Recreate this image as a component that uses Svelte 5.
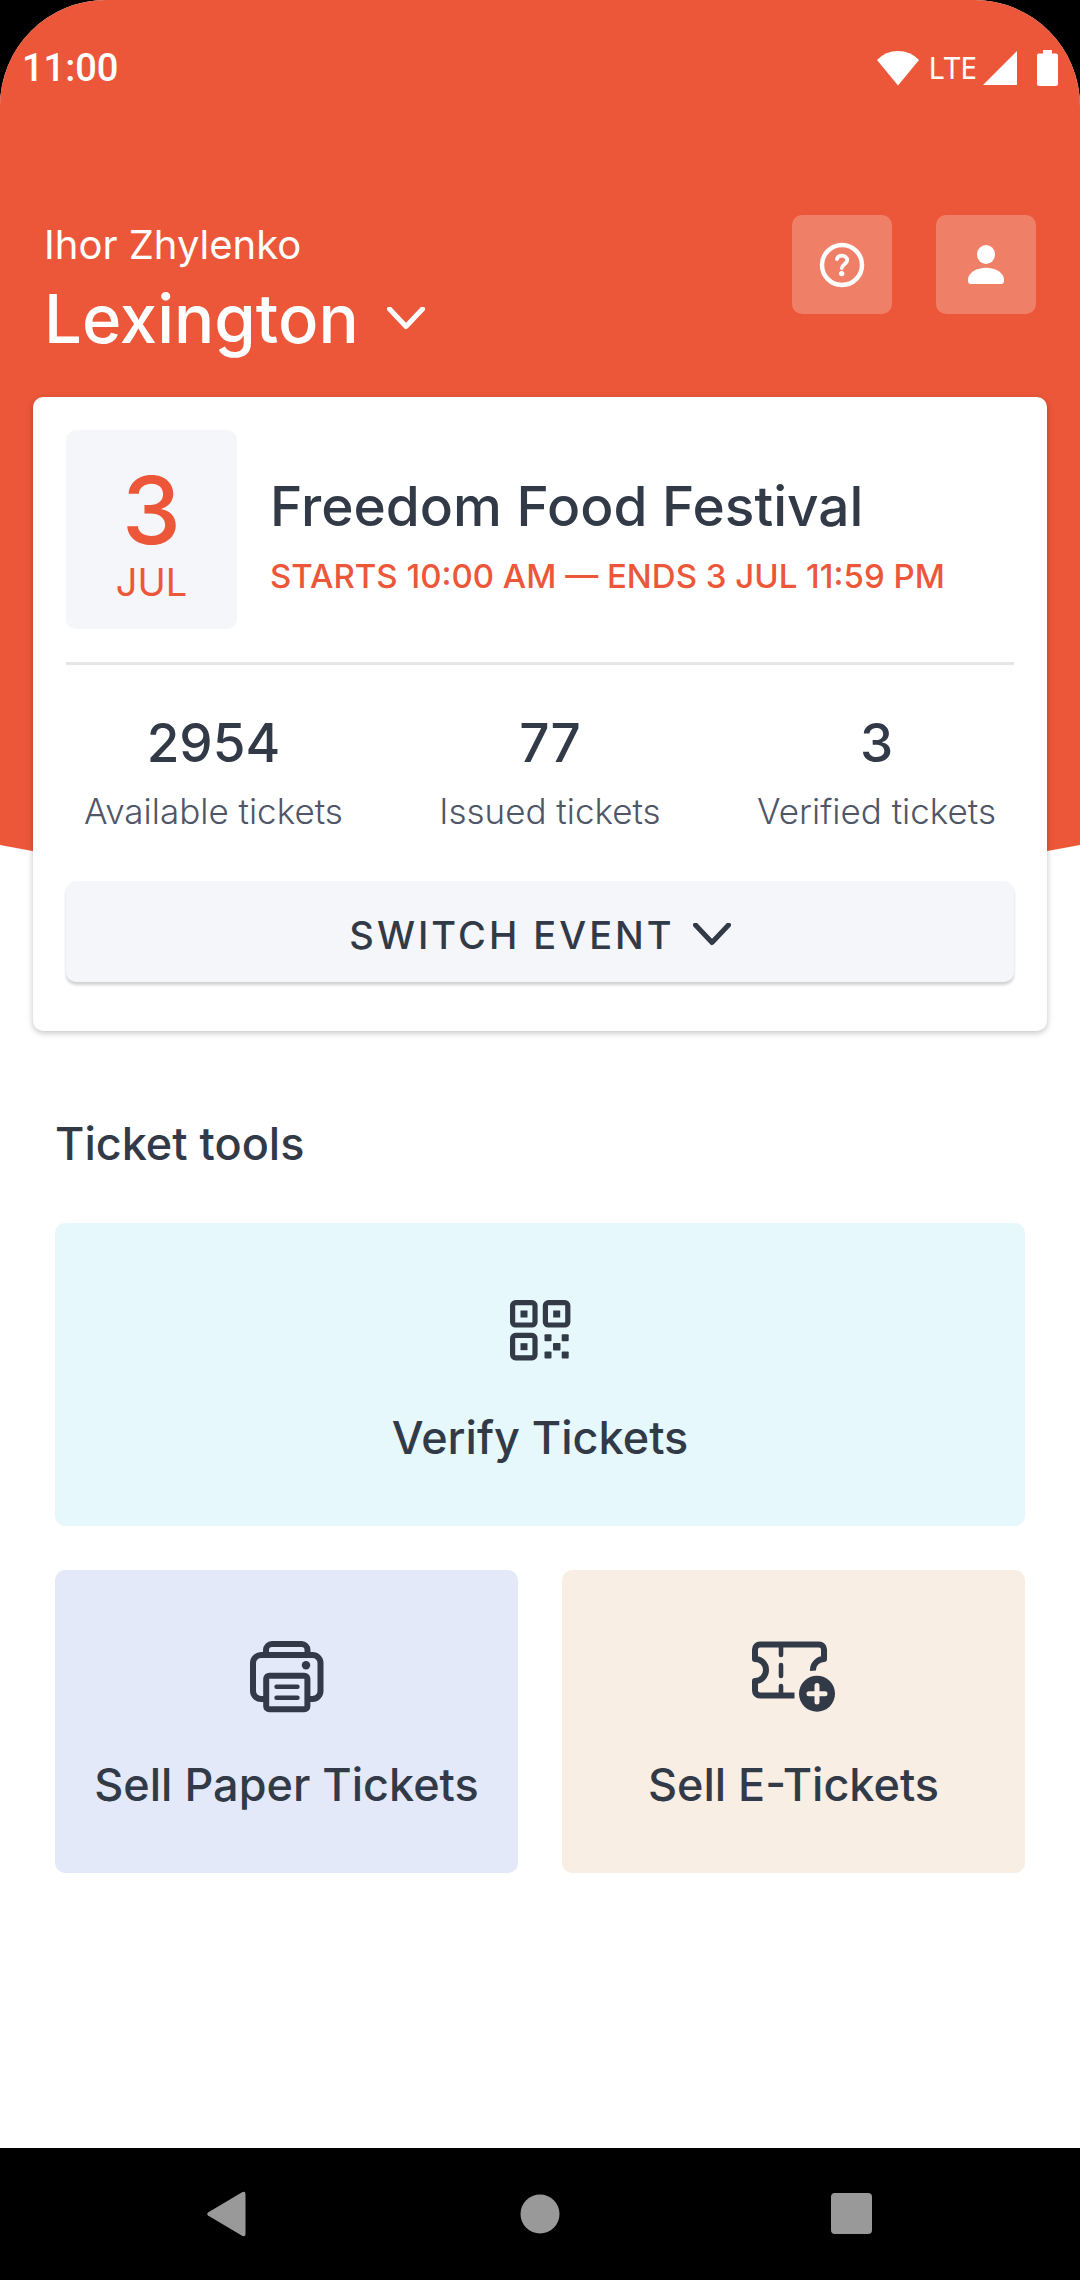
<script lang="ts">
  export let userName = 'Ihor Zhylenko';
  export let location = 'Lexington';

  const event = {
    day: '3',
    month: 'JUL',
    title: 'Freedom Food Festival',
    period: 'STARTS 10:00 AM — ENDS 3 JUL 11:59 PM'
  };

  const stats = [
    { value: 2954, label: 'Available tickets' },
    { value: 77, label: 'Issued tickets' },
    { value: 3, label: 'Verified tickets' }
  ];

  const tools = [
    { id: 'verify', label: 'Verify Tickets' },
    { id: 'paper', label: 'Sell Paper Tickets' },
    { id: 'eticket', label: 'Sell E-Tickets' }
  ];
</script>

<div class="screen">
  <div class="backdrop"></div>

  <div class="status-bar">
    <span class="time">11:00</span>
    <div class="status-icons">
      <svg width="42" height="36" viewBox="0 0 42 36">
        <path d="M0 10 Q8.500 1 21 1 Q33.500 1 42 10 L21 35.500 Z" fill="#fff" />
      </svg>
      <span class="network">LTE</span>
      <svg class="signal" width="34" height="36" viewBox="0 0 34 36">
        <path d="M34 1 V35 H0 Z" fill="#fff" />
      </svg>
      <svg width="21" height="36" viewBox="0 0 21 36">
        <path d="M6 0 H15 V3.500 H19 A2 2 0 0 1 21 5.500 V34 A2 2 0 0 1 19 36 H2 A2 2 0 0 1 0 34 V5.500 A2 2 0 0 1 2 3.500 H6 Z" fill="#fff" />
      </svg>
    </div>
  </div>

  <header>
    <div class="account">
      <div class="user-name">{userName}</div>
      <button class="location">
        {location}
        <svg width="38" height="24" viewBox="0 0 38 24">
          <path d="M2.500 2 L19 19.500 L35.500 2" class="chevron" />
        </svg>
      </button>
    </div>
    <div class="actions">
      <button class="action-btn" aria-label="Help">
        <svg width="46" height="46" viewBox="0 0 46 46" fill="none" stroke="#fff">
          <circle cx="23" cy="23" r="20" stroke-width="4.500" />
          <path d="M18 17 C18.600 14.800 20.400 13.700 22.800 13.700 C25.900 13.700 28.200 15.400 28.200 18.200 C28.200 22 22.800 22.300 22.800 26" stroke-width="3.800" stroke-linecap="round" />
          <circle cx="22.700" cy="31.600" r="2.700" fill="#fff" stroke="none" />
        </svg>
      </button>
      <button class="action-btn" aria-label="Profile">
        <svg width="36" height="39" viewBox="0 0 36 39" fill="#fff">
          <ellipse cx="18" cy="9.500" rx="9" ry="9.500" />
          <path d="M0 34.500 C0 28 8 22.700 18 22.700 S36 28 36 34.500 V36 A3 3 0 0 1 33 39 H3 A3 3 0 0 1 0 36 Z" />
        </svg>
      </button>
    </div>
  </header>

  <main>
    <section class="event-card">
      <div class="event">
        <div class="date">
          <span class="day">{event.day}</span>
          <span class="month">{event.month}</span>
        </div>
        <div class="event-info">
          <h1>{event.title}</h1>
          <p>{event.period}</p>
        </div>
      </div>

      <div class="stats">
        {#each stats as stat}
          <div class="stat">
            <strong>{stat.value}</strong>
            <span>{stat.label}</span>
          </div>
        {/each}
      </div>

      <button class="switch-btn">
        SWITCH EVENT
        <svg width="38" height="24" viewBox="0 0 38 24">
          <path d="M2.500 2 L19 19.500 L35.500 2" class="chevron" />
        </svg>
      </button>
    </section>

    <section class="tools">
      <h2>Ticket tools</h2>
      <div class="tool-grid">
        {#each tools as tool}
          <button class="tool {tool.id}">
            <span class="tool-icon">
              {#if tool.id === 'verify'}
                <svg width="61" height="61" viewBox="0 0 61 61" fill="currentColor">
                  <g fill="none" stroke="currentColor" stroke-width="5.200">
                    <rect x="2.600" y="2.600" width="22.400" height="22.400" rx="3" />
                    <rect x="35.400" y="2.600" width="22.400" height="22.400" rx="3" />
                    <rect x="2.600" y="35.400" width="22.400" height="22.400" rx="3" />
                  </g>
                  <rect x="10.500" y="10.500" width="7" height="7" />
                  <rect x="43.200" y="10.500" width="7" height="7" />
                  <rect x="10.500" y="43.200" width="7" height="7" />
                  <rect x="34.500" y="34.300" width="7" height="7" rx="1" />
                  <rect x="51.700" y="34.300" width="7" height="7" rx="1" />
                  <rect x="43" y="43" width="7.500" height="7.500" rx="1" />
                  <rect x="34.500" y="51.500" width="7" height="7" rx="1" />
                  <rect x="51.700" y="51.500" width="7" height="7" rx="1" />
                </svg>
              {:else if tool.id === 'paper'}
                <svg width="74" height="72" viewBox="0 0 74 72" fill="none" stroke="currentColor" stroke-width="6">
                  <path d="M16 14 V9 A6 6 0 0 1 22 3 H51.500 A6 6 0 0 1 57.500 9 V14" />
                  <path d="M16 58 H11 A8 8 0 0 1 3 50 V22 A8 8 0 0 1 11 14 H62.500 A8 8 0 0 1 70.500 22 V50 A8 8 0 0 1 62.500 58 H57.500" />
                  <rect x="16.200" y="34.700" width="41.200" height="33.500" rx="3" />
                  <path d="M26.500 45.700 H47.500 M26.500 56.700 H47.500" stroke-width="4.400" stroke-linecap="round" />
                  <circle cx="56" cy="24.300" r="4.200" fill="currentColor" stroke="none" />
                </svg>
              {:else}
                <svg width="84" height="72" viewBox="0 0 84 72" fill="none" stroke="currentColor" stroke-width="6" stroke-linejoin="round">
                  <path d="M42.500 54.500 H8 A5 5 0 0 1 3 49.500 V40 A11 11 0 0 0 3 18 V8.500 A5 5 0 0 1 8 3.500 H67 A5 5 0 0 1 72 8.500 V18 A11 11 0 0 0 61 29.700" />
                  <path d="M29 5 V14 M29 24 V35 M29 45 V53" stroke-width="4.600" stroke-linecap="round" />
                  <circle cx="65" cy="52.700" r="18" fill="currentColor" stroke="none" />
                  <path d="M65 44.500 V61 M57 52.700 H73" class="plus" />
                </svg>
              {/if}
            </span>
            {tool.label}
          </button>
        {/each}
      </div>
    </section>
  </main>

  <nav>
    <button aria-label="Back">
      <svg width="42" height="46" viewBox="0 0 42 46">
        <path d="M1 21.500 L35.500 1 Q38.500 0 38.500 3 V43 Q38.500 46 35.500 45 L1 24.500 Q-0.500 23 1 21.500 Z" fill="#999" />
      </svg>
    </button>
    <button aria-label="Home">
      <svg width="42" height="42" viewBox="0 0 42 42">
        <circle cx="21" cy="21" r="19.500" fill="#999" />
      </svg>
    </button>
    <button aria-label="Recent apps">
      <svg width="42" height="42" viewBox="0 0 42 42">
        <rect width="41" height="41" rx="4" fill="#999" />
      </svg>
    </button>
  </nav>
</div>

<style>
  :global(body) {
    margin: 0;
    background: #000;
  }

  .screen {
    --accent: #ec5739;
    --dark: #323a48;
    --muted: #4f5668;
    --soft: #f5f6fa;

    position: relative;
    display: flex;
    flex-direction: column;
    min-height: 100vh;
    box-sizing: border-box;
    border-radius: 106px 106px 0 0;
    overflow: hidden;
    background: #fff;
    color: var(--dark);
    font-family: Inter, 'Liberation Sans', sans-serif;
  }

  button {
    margin: 0;
    padding: 0;
    border: none;
    background: none;
    color: inherit;
    font-family: inherit;
    cursor: pointer;
  }

  svg {
    display: block;
    flex: none;
  }

  .chevron {
    fill: none;
    stroke: currentColor;
    stroke-width: 5;
    stroke-linecap: round;
    stroke-linejoin: round;
  }

  /* red area behind the header and the card, pointed at the bottom */
  .backdrop {
    position: absolute;
    top: 0;
    left: 0;
    right: 0;
    height: 945px;
    background: var(--accent);
    clip-path: polygon(0 0, 100% 0, 100% 845px, 50% 100%, 0 845px);
  }

  .status-bar,
  header,
  main {
    position: relative;
  }

  .status-bar {
    display: flex;
    justify-content: space-between;
    align-items: center;
    height: 56px;
    padding: 40px 22px 0;
    color: #fff;
    font-family: Roboto, sans-serif;
  }

  .time {
    font-size: 38px;
    font-weight: 500;
  }

  .status-icons {
    display: flex;
    align-items: center;
  }

  .network {
    margin: 0 6px 0 10px;
    font-family: 'Noto Sans', sans-serif;
    font-size: 30px;
    line-height: 40px;
  }

  .signal {
    margin-right: 20px;
  }

  header {
    display: flex;
    justify-content: space-between;
    align-items: flex-start;
    padding: 119px 44px 38px;
    color: #fff;
  }

  .account {
    padding-top: 6px;
  }

  .user-name {
    margin-bottom: 10px;
    font-size: 40px;
    line-height: 48px;
  }

  .location {
    display: flex;
    align-items: center;
    gap: 28px;
    font-size: 67px;
    font-weight: 500;
    line-height: 80px;
  }

  .actions {
    display: flex;
    gap: 44px;
  }

  .action-btn {
    display: flex;
    align-items: center;
    justify-content: center;
    width: 100px;
    height: 99px;
    border-radius: 10px;
    background: rgba(255, 255, 255, 0.24);
  }

  .event-card {
    margin: 0 33px;
    padding: 33px 33px 49px;
    border-radius: 10px;
    background: #fff;
    box-shadow: 0 2px 6px rgba(0, 0, 0, 0.24);
  }

  .event {
    display: flex;
    align-items: flex-start;
    gap: 33px;
    padding-bottom: 33px;
    border-bottom: 3px solid #e5e5e5;
  }

  .date {
    display: flex;
    flex-direction: column;
    align-items: center;
    flex: none;
    width: 171px;
    padding: 32px 0 23px;
    border-radius: 10px;
    background: var(--soft);
    color: var(--accent);
  }

  .day {
    font-size: 94px;
    font-weight: 500;
    line-height: 96px;
  }

  .month {
    font-size: 38px;
    line-height: 48px;
  }

  .event-info {
    padding-top: 44px;
  }

  h1 {
    margin: 0 0 14px;
    font-size: 55px;
    font-weight: 500;
    line-height: 64px;
  }

  p {
    margin: 0;
    color: var(--accent);
    font-size: 33px;
    font-weight: 500;
    line-height: 48px;
  }

  .stats {
    display: flex;
    justify-content: space-between;
    padding: 46px 18px;
  }

  .stat {
    display: flex;
    flex-direction: column;
    align-items: center;
    gap: 12px;
  }

  .stat strong {
    font-size: 53px;
    font-weight: 500;
    line-height: 64px;
  }

  .stat span {
    color: var(--muted);
    font-size: 35px;
    font-weight: 300;
    line-height: 48px;
  }

  .switch-btn {
    display: flex;
    align-items: center;
    justify-content: center;
    gap: 18px;
    width: 100%;
    height: 101px;
    padding-top: 6px;
    border-radius: 10px;
    background: var(--soft);
    box-shadow: 0 3px 3px rgba(0, 0, 0, 0.18);
    font-size: 38px;
    font-weight: 500;
    letter-spacing: 3px;
  }

  .tools {
    padding: 85px 55px 60px;
  }

  h2 {
    margin: 0 0 51px;
    font-size: 45px;
    font-weight: 500;
    line-height: 56px;
  }

  .tool-grid {
    display: grid;
    grid-template-columns: 1fr 1fr;
    gap: 44px;
  }

  .tool {
    display: flex;
    flex-direction: column;
    align-items: center;
    gap: 44px;
    padding: 71px 0 60px;
    border-radius: 10px;
    font-size: 45px;
    font-weight: 500;
    line-height: 56px;
  }

  .tool-icon {
    display: flex;
    align-items: center;
    height: 72px;
  }

  .verify {
    grid-column: 1 / -1;
    background: #e6f8fc;
  }

  .paper {
    background: #e4e9f9;
  }

  .eticket {
    background: #f8eee4;
  }

  .plus {
    stroke: #f8eee4;
    stroke-width: 5;
    stroke-linecap: round;
  }

  nav {
    display: flex;
    align-items: center;
    justify-content: space-between;
    height: 132px;
    margin-top: auto;
    padding: 0 207px;
    background: #000;
  }
</style>
